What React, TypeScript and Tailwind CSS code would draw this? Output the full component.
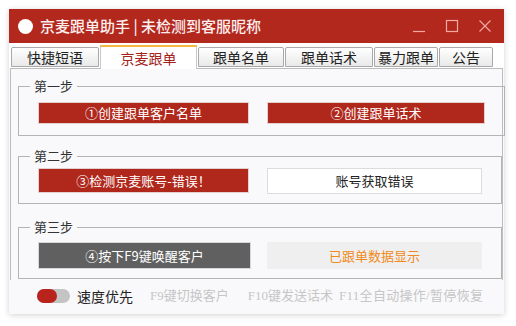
import React from "react"

const tabs = [
  { label: "快捷短语", w: "w-[88px]" },
  { label: "京麦跟单", w: "w-[97px]", active: true },
  { label: "跟单名单", w: "w-[86px]" },
  { label: "跟单话术", w: "w-[88px]" },
  { label: "暴力跟单", w: "w-[64px]" },
  { label: "公告", w: "w-[54px]" },
]

function Step({ title, children, className }: { title: string; children: React.ReactNode; className?: string }) {
  return (
    <fieldset className={`border border-[#b4b4b4] ml-[7px] mr-[4px] px-[19px] ${className ?? ""}`}>
      <legend className="-ml-[8px] px-[4px] text-[13px] leading-[16px] text-[#333]">{title}</legend>
      {children}
    </fieldset>
  )
}

export default function App() {
  return (
    <div className="min-h-screen bg-white p-[9px]" style={{ fontFamily: '"Noto Sans CJK SC", "Noto Sans", sans-serif' }}>
      <div className="w-[495px] h-[305px] bg-[#f9f9fb] shadow-[0_1px_6px_rgba(0,0,0,0.18)] flex flex-col">
        {/* title bar */}
        <div className="h-[34px] bg-[#b2281d] flex items-center pl-[9px] pr-[12px]">
          <div className="w-[15px] h-[15px] rounded-full bg-white" />
          <span className="ml-[7px] text-[15px] font-medium text-[#fdeeee]">京麦跟单助手 | 未检测到客服昵称</span>
          <div className="ml-auto flex items-center gap-[19px] text-[#f2aaa3]">
            <svg width="14" height="14" viewBox="0 0 14 14"><path d="M1 12.5h12" stroke="currentColor" strokeWidth="1.2" /></svg>
            <svg width="14" height="14" viewBox="0 0 14 14"><rect x="1.5" y="1.5" width="11" height="11" fill="none" stroke="currentColor" strokeWidth="1.2" /></svg>
            <svg width="14" height="14" viewBox="0 0 14 14"><path d="M1.5 1.5l11 11M12.5 1.5l-11 11" stroke="currentColor" strokeWidth="1.1" /></svg>
          </div>
        </div>

        {/* tabs */}
        <div className="h-[25px] bg-white flex items-end pl-[2px] gap-[1px]">
          {tabs.map((t) =>
            t.active ? (
              <div key={t.label} className={`${t.w} h-[24px] -mb-[1px] bg-white border-x border-[#c8c8c8] border-t-2 border-t-[#f4b740] flex items-center justify-center text-[14px] text-[#a3231b] relative z-10`}>
                {t.label}
              </div>
            ) : (
              <div key={t.label} className={`${t.w} h-[20px] mb-[1px] bg-gradient-to-b from-white to-[#e9e9e9] border border-[#a9a9a9] rounded-t-[2px] flex items-center justify-center text-[14px] text-[#222]`}>
                {t.label}
              </div>
            )
          )}
        </div>

        {/* pane */}
        <div className="mx-[1px] border-t border-x border-[#bdbdbd] h-[212px] flex flex-col pt-[9px]">
          <Step title="第一步" className="h-[58px]">
            <div className="flex gap-[18px] mt-[8px]">
              <button className="w-[211px] h-[22px] bg-[#b0281c] border border-[#e4d0cf] text-white text-[13px]">①创建跟单客户名单</button>
              <button className="w-[218px] h-[22px] bg-[#b0281c] border border-[#e4d0cf] text-white text-[13px]">②创建跟单话术</button>
            </div>
          </Step>
          <Step title="第二步" className="h-[56px] mt-[12px]">
            <div className="flex gap-[18px] mt-[4px]">
              <button className="w-[211px] h-[25px] bg-[#b0281c] border border-[#e4d0cf] text-white text-[13px]">③检测京麦账号-错误！</button>
              <button className="w-[215px] h-[26px] bg-white border border-[#dcdcdc] text-[#222] text-[13px]">账号获取错误</button>
            </div>
          </Step>
          <Step title="第三步" className="h-[60px] mt-[15px]">
            <div className="flex gap-[16px] mt-[7px]">
              <button className="w-[213px] h-[27px] bg-[#606060] border border-[#d8d8d8] text-white text-[13px]">④按下F9键唤醒客户</button>
              <button className="w-[215px] h-[27px] bg-[#efefef] text-[#f08a1c] text-[13px]">已跟单数据显示</button>
            </div>
          </Step>
        </div>

        {/* footer */}
        <div className="flex-1 flex items-center pl-[28px] pb-[2px]">
          <div className="w-[33px] h-[14px] rounded-full bg-[#c4c4c4] flex items-center">
            <div className="w-[20px] h-[14px] rounded-full bg-[#b8241b]" />
          </div>
          <span className="ml-[7px] text-[14px] text-[#222]">速度优先</span>
          <div className="flex whitespace-nowrap text-[13px] text-[#c6c6c6]" style={{ fontFamily: '"Liberation Serif", "Noto Sans CJK SC", serif' }}>
            <span className="ml-[17px]">F9键切换客户</span>
            <span className="ml-[19px]">F10键发送话术</span>
            <span className="ml-[6px] tracking-[0.3px]">F11全自动操作/暂停恢复</span>
          </div>
        </div>
      </div>
    </div>
  )
}
